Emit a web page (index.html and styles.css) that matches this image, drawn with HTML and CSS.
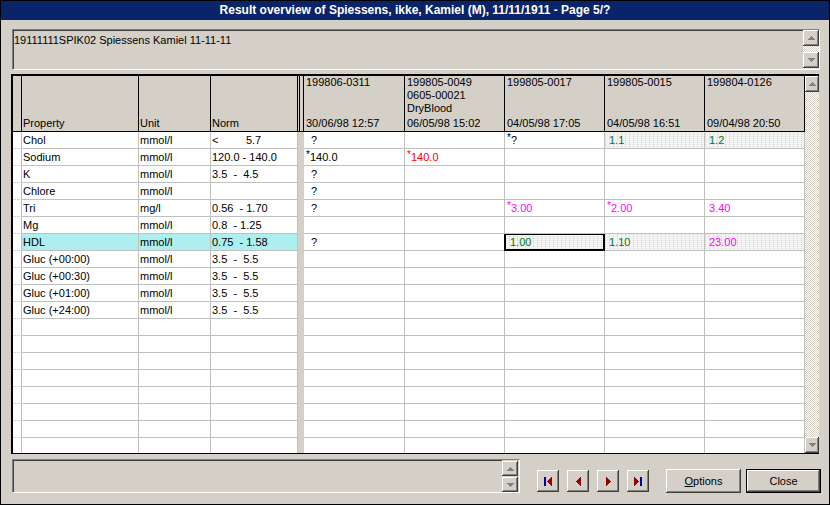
FILE: index.html
```html
<!DOCTYPE html>
<html>
<head>
<meta charset="utf-8">
<title>Result overview</title>
<link rel="stylesheet" href="styles.css">
</head>
<body>
<div class="win">
  <div class="titlebar">Result overview of Spiessens, ikke, Kamiel (M), 11/11/1911 - Page 5/?</div>
  <div class="info sunken">
    <div class="info-text">19111111SPIK02 Spiessens Kamiel 11-11-11</div>
    <div class="spin">
      <div class="sbtn"><svg width="7" height="4" viewBox="0 0 7 4"><path class="ar" d="M3 0h1v1h1v1h1v1h1v1H0V3h1V2h1V1h1z"/></svg></div>
      <div class="sbtn"><svg width="7" height="4" viewBox="0 0 7 4"><path class="ar" d="M0 0h7v1H6v1H5v1H4v1H3V3H2V2H1V1H0z"/></svg></div>
    </div>
  </div>

  <div class="grid">
    <div class="grid-main">
      <div class="hrow">
        <div class="hc"></div>
        <div class="hc"><span class="bot">Property</span></div>
        <div class="hc"><span class="bot">Unit</span></div>
        <div class="hc"><span class="bot">Norm</span></div>
        <div class="hc hsep"></div>
        <div class="hc"><span>199806-0311</span><span class="bot">30/06/98 12:57</span></div>
        <div class="hc"><span>199805-0049</span><span>0605-00021</span><span>DryBlood</span><span class="bot">06/05/98 15:02</span></div>
        <div class="hc"><span>199805-0017</span><span class="bot">04/05/98 17:05</span></div>
        <div class="hc"><span>199805-0015</span><span class="bot">04/05/98 16:51</span></div>
        <div class="hc"><span>199804-0126</span><span class="bot">09/04/98 20:50</span></div>
      </div>
      <div class="rows">
        <div class="row"><div class="ind"></div><div>Chol</div><div>mmol/l</div><div>&lt;         5.7</div><div class="sep"></div><div class="v"> ?</div><div></div><div><span class="ast">*</span>?</div><div class="v dot green">1.1</div><div class="v dot green">1.2</div></div>
        <div class="row"><div class="ind"></div><div>Sodium</div><div>mmol/l</div><div>120.0 - 140.0</div><div class="sep"></div><div><span class="ast">*</span>140.0</div><div class="red"><span class="ast">*</span>140.0</div><div></div><div></div><div></div></div>
        <div class="row"><div class="ind"></div><div>K</div><div>mmol/l</div><div>3.5  -  4.5</div><div class="sep"></div><div class="v"> ?</div><div></div><div></div><div></div><div></div></div>
        <div class="row"><div class="ind"></div><div>Chlore</div><div>mmol/l</div><div></div><div class="sep"></div><div class="v"> ?</div><div></div><div></div><div></div><div></div></div>
        <div class="row"><div class="ind"></div><div>Tri</div><div>mg/l</div><div>0.56  - 1.70</div><div class="sep"></div><div class="v"> ?</div><div></div><div class="mag"><span class="ast">*</span>3.00</div><div class="mag"><span class="ast">*</span>2.00</div><div class="v mag">3.40</div></div>
        <div class="row"><div class="ind"></div><div>Mg</div><div>mmol/l</div><div>0.8  - 1.25</div><div class="sep"></div><div></div><div></div><div></div><div></div><div></div></div>
        <div class="row sel"><div class="ind"></div><div class="cy">HDL</div><div class="cy">mmol/l</div><div class="cy">0.75  - 1.58</div><div class="sep"></div><div class="v"> ?</div><div></div><div class="v dot green focus">1.00</div><div class="v dot green">1.10</div><div class="v dot mag">23.00</div></div>
        <div class="row"><div class="ind"></div><div>Gluc (+00:00)</div><div>mmol/l</div><div>3.5  -  5.5</div><div class="sep"></div><div></div><div></div><div></div><div></div><div></div></div>
        <div class="row"><div class="ind"></div><div>Gluc (+00:30)</div><div>mmol/l</div><div>3.5  -  5.5</div><div class="sep"></div><div></div><div></div><div></div><div></div><div></div></div>
        <div class="row"><div class="ind"></div><div>Gluc (+01:00)</div><div>mmol/l</div><div>3.5  -  5.5</div><div class="sep"></div><div></div><div></div><div></div><div></div><div></div></div>
        <div class="row"><div class="ind"></div><div>Gluc (+24:00)</div><div>mmol/l</div><div>3.5  -  5.5</div><div class="sep"></div><div></div><div></div><div></div><div></div><div></div></div>
        <div class="row"><div class="ind"></div><div></div><div></div><div></div><div class="sep"></div><div></div><div></div><div></div><div></div><div></div></div>
        <div class="row"><div class="ind"></div><div></div><div></div><div></div><div class="sep"></div><div></div><div></div><div></div><div></div><div></div></div>
        <div class="row"><div class="ind"></div><div></div><div></div><div></div><div class="sep"></div><div></div><div></div><div></div><div></div><div></div></div>
        <div class="row"><div class="ind"></div><div></div><div></div><div></div><div class="sep"></div><div></div><div></div><div></div><div></div><div></div></div>
        <div class="row"><div class="ind"></div><div></div><div></div><div></div><div class="sep"></div><div></div><div></div><div></div><div></div><div></div></div>
        <div class="row"><div class="ind"></div><div></div><div></div><div></div><div class="sep"></div><div></div><div></div><div></div><div></div><div></div></div>
        <div class="row"><div class="ind"></div><div></div><div></div><div></div><div class="sep"></div><div></div><div></div><div></div><div></div><div></div></div>
        <div class="row"><div class="ind"></div><div></div><div></div><div></div><div class="sep"></div><div></div><div></div><div></div><div></div><div></div></div>
      </div>
    </div>
    <div class="vscroll">
      <div class="sbtn vs"><svg width="7" height="4" viewBox="0 0 7 4"><path class="ar" d="M3 0h1v1h1v1h1v1h1v1H0V3h1V2h1V1h1z"/></svg></div>
      <div class="sbtn vs"><svg width="7" height="4" viewBox="0 0 7 4"><path class="ar" d="M0 0h7v1H6v1H5v1H4v1H3V3H2V2H1V1H0z"/></svg></div>
    </div>
  </div>

  <div class="footer">
    <div class="status sunken">
      <div class="status-text"></div>
      <div class="spin small">
        <div class="sbtn sm"><svg width="7" height="4" viewBox="0 0 7 4"><path class="ar" d="M3 0h1v1h1v1h1v1h1v1H0V3h1V2h1V1h1z"/></svg></div>
        <div class="sbtn sm"><svg width="7" height="4" viewBox="0 0 7 4"><path class="ar" d="M0 0h7v1H6v1H5v1H4v1H3V3H2V2H1V1H0z"/></svg></div>
      </div>
    </div>
    <div class="nav">
      <div class="nbtn btn3d"><svg width="8" height="9" viewBox="0 0 8 9"><rect class="blu" x="0" y="0" width="2" height="9"/><path class="rd" transform="translate(3 0)" d="M0 4h1v-1h1v-1h1v-1h1v-1h1v9h-1v-1h-1v-1h-1v-1h-1v-1h-1z"/></svg></div>
      <div class="nbtn btn3d"><svg width="5" height="9" viewBox="0 0 5 9"><path class="rd" d="M0 4h1v-1h1v-1h1v-1h1v-1h1v9h-1v-1h-1v-1h-1v-1h-1v-1h-1z"/></svg></div>
      <div class="nbtn btn3d"><svg width="5" height="9" viewBox="0 0 5 9"><path class="rd" d="M5 4h-1v-1h-1v-1h-1v-1h-1v-1h-1v9h1v-1h1v-1h1v-1h1v-1h1z"/></svg></div>
      <div class="nbtn btn3d"><svg width="8" height="9" viewBox="0 0 8 9"><path class="rd" d="M5 4h-1v-1h-1v-1h-1v-1h-1v-1h-1v9h1v-1h1v-1h1v-1h1v-1h1z"/><rect class="blu" x="6" y="0" width="2" height="9"/></svg></div>
    </div>
    <div class="pbtn btn3d"><span class="ul">O</span>ptions</div>
    <div class="pbtn def"><div class="btn3d inner">Close</div></div>
  </div>
</div>
</body>
</html>
```

FILE: styles.css
```css
* { box-sizing: border-box; margin: 0; padding: 0; }
html, body { width: 830px; height: 505px; overflow: hidden; }
body {
  font-family: "Liberation Sans", Arial, sans-serif;
  font-size: 11px;
  color: #000;
  background: #d4d0c8;
}
.win {
  width: 830px;
  height: 505px;
  border: 1px solid #000;
  background: #d4d0c8;
  display: flex;
  flex-direction: column;
}
.titlebar {
  height: 19px;
  background: #0a246a;
  color: #fff;
  font-weight: bold;
  font-size: 12px;
  line-height: 18px;
  text-align: center;
  white-space: nowrap;
}
.sunken {
  border-top: 1px solid #808080;
  border-left: 1px solid #808080;
  border-right: 1px solid #fff;
  border-bottom: 1px solid #fff;
  box-shadow: inset 1px 1px 0 #404040;
}
.btn3d {
  background: #d4d0c8;
  box-shadow: inset -1px -1px 0 #404040, inset 1px 1px 0 #fff, inset -2px -2px 0 #808080, inset 2px 2px 0 #d4d0c8;
}
.sbtn {
  width: 16px;
  height: 16px;
  background: #d4d0c8;
  box-shadow: inset -1px -1px 0 #404040, inset 1px 1px 0 #fff, inset -2px -2px 0 #808080, inset 2px 2px 0 #d4d0c8;
  display: flex;
  align-items: center;
  justify-content: center;
}
.sbtn svg { display: block; }
.ar { fill: #808080; }

/* info box */
.info {
  margin: 9px 9px 0 11px;
  height: 41px;
  display: flex;
}
.info-text {
  flex: 1;
  padding: 4px 0 0 1px;
  line-height: 13px;
}
.spin {
  width: 16px;
  display: flex;
  flex-direction: column;
  justify-content: space-between;
  padding-bottom: 1px;
  background: repeating-conic-gradient(#d4d0c8 0 25%, #fff 0 50%) 0 0 / 2px 2px;
}

/* grid */
.grid {
  margin: 4px 10px 0 10px;
  height: 380px;
  border-left: 2px solid #000;
  border-top: 2px solid #000;
  border-right: 1px solid #000;
  border-bottom: 1px solid #000;
  display: flex;
  background: #d4d0c8;
}
.grid-main {
  width: 792px;
  display: flex;
  flex-direction: column;
}
.hrow, .row {
  display: grid;
  grid-template-columns: 9px 117px 72px 87px 6px 101px 100px 100px 100px 100px;
}
.hrow {
  height: 56px;
  border-bottom: 1px solid #000;
}
.hc {
  background: #d4d0c8;
  border-right: 1px solid #000;
  display: flex;
  flex-direction: column;
  padding: 0 2px 1px 2px;
  line-height: 13px;
  white-space: nowrap;
  overflow: hidden;
}
.hc:nth-child(2), .hc:nth-child(3), .hc:nth-child(4) { padding-left: 1px; }
.hc .bot { margin-top: auto; }
.hsep {
  padding: 0;
  background: linear-gradient(90deg, #d4d0c8 0 1px, #000 1px 2px, #d4d0c8 2px);
}
.rows {
  flex: 1;
  overflow: hidden;
  background: #fff;
}
.row { height: 17px; }
.row > div {
  background: #fff;
  border-right: 1px solid #c0c0c0;
  border-bottom: 1px solid #c0c0c0;
  padding-left: 2px;
  line-height: 16px;
  white-space: pre;
  overflow: hidden;
}
.row > div:nth-child(2), .row > div:nth-child(3), .row > div:nth-child(4) { padding-left: 1px; }
.row > .ind {
  padding: 0;
  border-bottom: 1px dotted #c0c0c0;
}
.row > .sep {
  background: #d4d0c8;
  border: none;
}
.row > .v { padding-left: 4px; }
.row > .cy { background: #aeeeee; }
.row > .dot {
  background-color: #f3f3f3;
  background-image: conic-gradient(at 1px 1px, transparent 75%, #d2d2d2 0);
  background-size: 4px 2px;
}
.row > .focus {
  box-shadow: inset 0 0 0 1px #000;
  border-right-color: #000;
  border-bottom-color: #000;
  margin-left: -1px;
  padding-left: 5px;
  border-left: 1px solid #000;
}
.green { color: #008000; }
.red { color: #ff0000; }
.mag { color: #ff00ff; }
.ast {
  display: inline-block;
  width: 4px;
  font-size: 10px;
  line-height: 10px;
  vertical-align: top;
  margin-top: 1px;
  overflow: visible;
}

.vscroll {
  width: 14px;
  display: flex;
  flex-direction: column;
  justify-content: space-between;
  background: repeating-conic-gradient(#d4d0c8 0 25%, #fff 0 50%) 0 0 / 2px 2px;
}
.sbtn.vs { width: 14px; }

/* footer */
.footer {
  margin: 5px 0 0 11px;
  display: flex;
  align-items: flex-start;
}
.status {
  width: 508px;
  height: 34px;
  display: flex;
}
.status-text { flex: 1; }
.spin.small {
  width: 17px;
  padding: 1px 1px 0 0;
  justify-content: flex-start;
  gap: 1px;
  background: #d4d0c8;
}
.sbtn.sm { width: 16px; height: 15px; }
.nav {
  display: flex;
  gap: 8px;
  margin: 11px 0 0 17px;
}
.nbtn {
  width: 22px;
  height: 22px;
  display: flex;
  align-items: center;
  justify-content: center;
}
.nbtn svg { display: block; }
.blu { fill: #0000b0; }
.rd { fill: #9a0000; }
.pbtn {
  width: 75px;
  height: 24px;
  margin-top: 10px;
  display: flex;
  align-items: center;
  justify-content: center;
  line-height: 13px;
}
.pbtn.btn3d { margin-left: 17px; }
.ul { text-decoration: underline; }
.def {
  margin-left: 5px;
  border: 1px solid #000;
}
.def .inner {
  width: 100%;
  height: 100%;
  display: flex;
  align-items: center;
  justify-content: center;
}
```
